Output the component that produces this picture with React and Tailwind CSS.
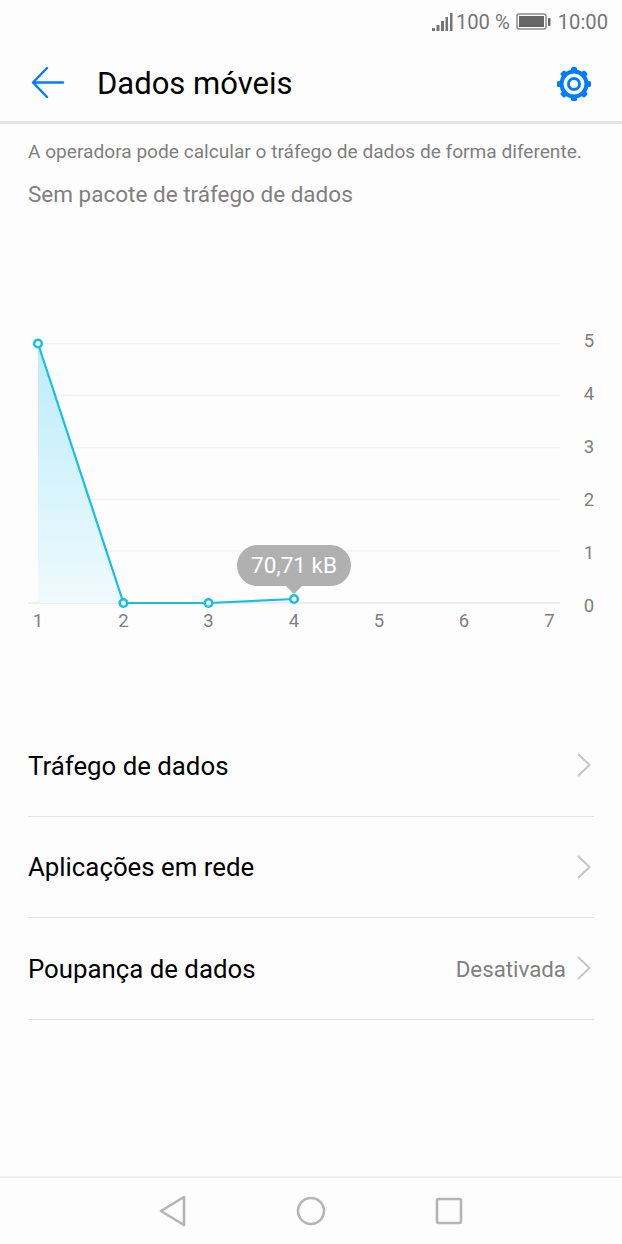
const gridLines = [13.5, 65.5, 117.5, 169.5, 221]
const yLabels = [5, 4, 3, 2, 1, 0]
const xLabels = [
  [1, 38],
  [2, 123.5],
  [3, 208.5],
  [4, 294],
  [5, 379],
  [6, 464],
  [7, 549.5],
]
const points = [
  [38, 13.5],
  [123.5, 273],
  [208.5, 273],
  [294, 269],
]

function StatusBar() {
  return (
    <div className="h-[44px] flex items-center justify-end pr-[14px] text-[20.2px] text-[#757575]">
      <svg width="21" height="20" viewBox="0 0 21 20" className="mr-[3px]">
        <rect x="0" y="16" width="3" height="3" fill="#757575" />
        <rect x="4.5" y="13" width="3" height="6" fill="#757575" />
        <rect x="9" y="9" width="3" height="10" fill="#757575" />
        <rect x="13.5" y="5" width="2.5" height="14" fill="#757575" />
        <rect x="18" y="1" width="2.5" height="18" fill="#757575" />
      </svg>
      <span>100 %</span>
      <svg width="35" height="18" viewBox="0 0 35 18" className="ml-[6px] mr-[7px]">
        <rect x="1" y="1" width="29" height="15" rx="2" fill="none" stroke="#8a8a8a" strokeWidth="1.5" />
        <rect x="3" y="3" width="25" height="11" fill="#666666" />
        <rect x="32" y="5" width="2.5" height="8" rx="1" fill="#666666" />
      </svg>
      <span>10:00</span>
    </div>
  )
}

function Header() {
  return (
    <div className="h-[80px] flex items-center pl-[31px] pr-[30px] border-b-[3px] border-[#e6e6e6]">
      <svg width="34" height="34" viewBox="0 0 34 34" className="mr-[32px] text-[#007dff]">
        <path d="M16 2 L2 16.5 L16 31 M2 16.5 L32 16.5" fill="none" stroke="currentColor" strokeWidth="2.4" strokeLinecap="round" strokeLinejoin="round" />
      </svg>
      <h1 className="flex-1 pt-[4px] text-[31px] text-black font-normal">Dados móveis</h1>
      <svg width="36" height="36" viewBox="0 0 36 36" className="text-[#007dff] mt-[2px]">
        <circle cx="18" cy="18" r="12.5" fill="none" stroke="currentColor" strokeWidth="4" />
        <circle cx="18" cy="18" r="5.5" fill="none" stroke="currentColor" strokeWidth="3" />
        {[0, 45, 90, 135, 180, 225, 270, 315].map((deg) => (
          <rect key={deg} x="15" y="1" width="6" height="5" rx="1.5" fill="currentColor" transform={`rotate(${deg} 18 18)`} />
        ))}
      </svg>
    </div>
  )
}

function Chart() {
  return (
    <div className="relative h-[300px] mt-[122px]">
      <svg width="622" height="300" viewBox="0 0 622 300" className="block">
        <defs>
          <linearGradient id="area" x1="0" y1="0" x2="0" y2="1">
            <stop offset="0" stopColor="#bcecfa" />
            <stop offset="1" stopColor="#effafd" />
          </linearGradient>
        </defs>
        {gridLines.map((y) => (
          <line key={y} x1="38" x2="560" y1={y} y2={y} stroke="#f2f2f2" strokeWidth="1.5" />
        ))}
        <line x1="28" x2="560" y1="273" y2="273" stroke="#e8e8e8" strokeWidth="1.5" />
        <polygon points="38,13.5 123.5,273 38,273" fill="url(#area)" />
        <polyline points={points.map((p) => p.join(',')).join(' ')} fill="none" stroke="#16bfe6" strokeWidth="2.2" />
        {points.map(([x, y]) => (
          <circle key={x} cx={x} cy={y} r="3.8" fill="#ffffff" stroke="#16bfe6" strokeWidth="2.6" />
        ))}
        {yLabels.map((n, i) => (
          <text key={n} x="589" y={17 + i * 53} textAnchor="middle" fontSize="18.5" fill="#7f7f7f">{n}</text>
        ))}
        {xLabels.map(([n, x]) => (
          <text key={n} x={x} y="296.5" textAnchor="middle" fontSize="18.5" fill="#7f7f7f">{n}</text>
        ))}
      </svg>
      <div className="absolute left-[237px] top-[215px] w-[114px] h-[41px] rounded-[21px] bg-[#b0b0b0] text-white text-[22.5px] flex items-center justify-center">
        70,71 kB
        <div className="absolute left-[49px] top-[41px] w-0 h-0 border-x-[8px] border-x-transparent border-t-[8px] border-t-[#b0b0b0]" />
      </div>
    </div>
  )
}

function Row({ label, value }) {
  return (
    <div className="h-[101.5px] flex items-center border-b border-[#e3e3e3]">
      <span className="flex-1 pt-[2px] text-[25.8px] text-black">{label}</span>
      {value && <span className="pt-[2px] text-[22.3px] text-[#808080] mr-[10px]">{value}</span>}
      <svg width="16" height="26" viewBox="0 0 16 26" className="mr-[2px]">
        <path d="M2 2 L13.5 13 L2 24" fill="none" stroke="#c6c6c6" strokeWidth="2" />
      </svg>
    </div>
  )
}

export default function App() {
  return (
    <div className="w-[622px] h-[1244px] flex flex-col bg-[#fdfdfd] font-['Roboto',sans-serif] overflow-hidden">
      <StatusBar />
      <Header />
      <div className="flex-1">
        <div className="px-[28px] pt-[16px]">
          <p className="text-[19.12px] leading-[24px] text-[#7f7f7f] whitespace-nowrap">A operadora pode calcular o tráfego de dados de forma diferente.</p>
          <p className="mt-[16px] text-[22.5px] leading-[28px] text-[#808080]">Sem pacote de tráfego de dados</p>
        </div>
        <Chart />
        <div className="mx-[28px] mt-[85px]">
          <Row label="Tráfego de dados" />
          <Row label="Aplicações em rede" />
          <Row label="Poupança de dados" value="Desativada" />
        </div>
      </div>
      <div className="h-[68px] border-t-[2px] border-[#efefef] flex items-center justify-center gap-[108px] pb-[1px] pr-[1px]">
        <svg width="30" height="34" viewBox="0 0 30 34">
          <path d="M26 3 L26 31 L3 17 Z" fill="none" stroke="#b5b5b5" strokeWidth="2.6" strokeLinejoin="round" />
        </svg>
        <svg width="30" height="30" viewBox="0 0 30 30">
          <circle cx="15" cy="15" r="13" fill="none" stroke="#b5b5b5" strokeWidth="2.6" />
        </svg>
        <svg width="30" height="30" viewBox="0 0 30 30">
          <rect x="3" y="3" width="24" height="24" rx="1.5" fill="none" stroke="#b5b5b5" strokeWidth="2.6" />
        </svg>
      </div>
    </div>
  )
}
